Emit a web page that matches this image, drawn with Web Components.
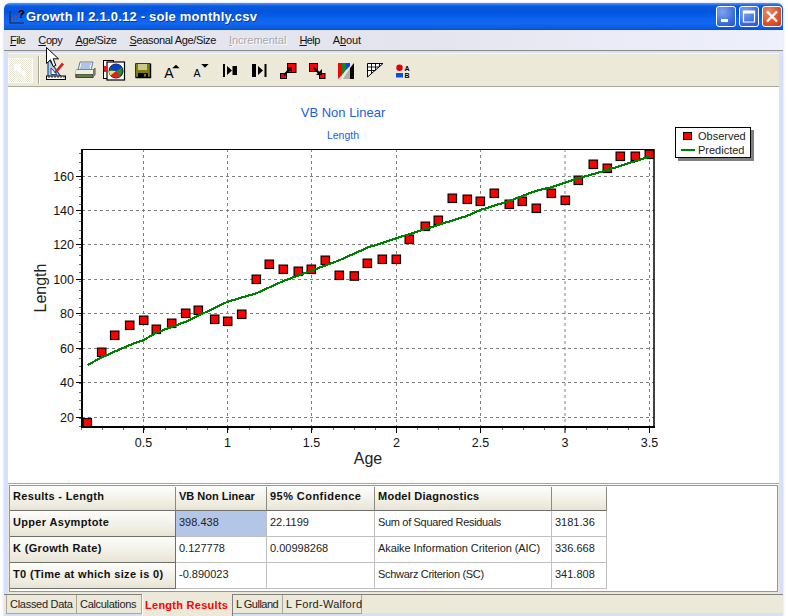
<!DOCTYPE html>
<html lang="en"><head><meta charset="utf-8"><title>Growth II</title>
<style>
html,body{margin:0;padding:0;background:#fff;width:788px;height:616px;overflow:hidden;font:11px "Liberation Sans",Arial,sans-serif;color:#000}
</style></head><body>
<xp-window>
  <xp-titlebar slot="title">Growth II 2.1.0.12 - sole monthly.csv</xp-titlebar>
  <xp-menubar slot="menu">
    <xp-menuitem style="letter-spacing:-.6px"><u>F</u>ile</xp-menuitem><xp-menuitem style="letter-spacing:-.4px"><u>C</u>opy</xp-menuitem><xp-menuitem style="letter-spacing:-.37px"><u>A</u>ge/Size</xp-menuitem><xp-menuitem style="letter-spacing:-.35px"><u>S</u>easonal Age/Size</xp-menuitem><xp-menuitem disabled><u>I</u>ncremental</xp-menuitem><xp-menuitem style="letter-spacing:-.6px"><u>H</u>elp</xp-menuitem><xp-menuitem style="letter-spacing:-.1px">A<u>b</u>out</xp-menuitem>
  </xp-menubar>
  <xp-toolbar slot="tools"></xp-toolbar>
  <growth-chart slot="chart"><chart-legend></chart-legend></growth-chart>
  <results-grid slot="grid"></results-grid>
  <xp-tabs slot="tabs">
    <xp-tab style="width:71px;letter-spacing:-.28px;border-left:1px solid #aca899">Classed Data</xp-tab><xp-tab style="width:65px;letter-spacing:-.3px">Calculations</xp-tab><xp-tab active style="width:91px;letter-spacing:.27px">Length Results</xp-tab><xp-tab style="width:50px;letter-spacing:-.5px">L Gulland</xp-tab><xp-tab style="width:79px;letter-spacing:.27px">L Ford-Walford</xp-tab>
  </xp-tabs>
  <xp-cursor slot="over"></xp-cursor>
</xp-window>
<script>
function def(name, css, html){
  customElements.define(name, class extends HTMLElement{
    constructor(){super();const r=this.attachShadow({mode:'open'});r.innerHTML='<style>'+css+'</style>'+html;}
  });
}
def('xp-window',`
:host{display:flex;flex-direction:column;position:relative;box-sizing:border-box;width:779px;height:613px;margin:3px 0 0 4px;background:#d6e0fa;box-shadow:0 0 3px #c4d2f4;border-radius:6px 6px 0 0}
.panel{display:flex;flex-direction:column;margin:2px 4px 0 4px;background:#ece9d8;height:541px}
.sep{height:2px;background:#fff;border-top:1px solid #aca899;box-sizing:border-box;}
.gridwrap{padding:0 1px 2px 1px;height:109px;box-sizing:border-box}
`,`<slot name="title"></slot><slot name="menu"></slot>
<div class="panel"><slot name="tools"></slot><slot name="chart"></slot><div class="sep"></div><div class="gridwrap"><slot name="grid"></slot></div></div>
<slot name="tabs"></slot><slot name="over"></slot>`);

def('xp-titlebar',`
:host{display:flex;align-items:center;height:27px;box-sizing:border-box;padding:0 1px 0 3px;border-radius:6px 6px 0 0;
background:linear-gradient(180deg,#5c96f2 0,#0a5ae0 3px,#0054dc 9px,#0a62ee 15px,#1368f0 20px,#0a5ce4 25px,#0450d0 27px);color:#fff}
.t{flex:1;font:bold 13px "Liberation Sans",sans-serif;letter-spacing:.22px;margin-left:1px;text-shadow:1px 1px #0d3aa0;white-space:nowrap}
svg{display:block;flex:none}
.b{flex:none;box-sizing:border-box;width:20px;height:21px;border:1px solid #fff;border-radius:3px;margin-left:3px;background:radial-gradient(circle at 30% 25%,#7fa5ee,#3566dc 70%,#2a55c8);display:flex;align-items:center;justify-content:center}
.b.x{background:radial-gradient(circle at 30% 25%,#ea8a68,#e0502a 60%,#c83c18)}
`,`<svg width="18" height="18" viewBox="0 0 18 18"><path d="M3 3V15H17" fill="none" stroke="#222" stroke-width="1.2"/><path d="M4 13L7 9L11 8L14 4" fill="none" stroke="#c33" stroke-width="1" stroke-dasharray="2 1"/><text x="11" y="10" font-family="Liberation Sans" font-weight="bold" font-size="11" fill="#000">?</text></svg>
<div class="t"><slot></slot></div>
<div class="b"><svg width="18" height="19" viewBox="0 0 18 19"><rect x="4" y="12" width="7" height="3" fill="#fff"/></svg></div>
<div class="b"><svg width="18" height="19" viewBox="0 0 18 19"><path d="M3.5 4H14.5V15H3.5Z" fill="none" stroke="#fff" stroke-width="1.2"/><rect x="3.5" y="4" width="11" height="2.5" fill="#fff"/></svg></div>
<div class="b x"><svg width="18" height="19" viewBox="0 0 18 19"><path d="M4 4.5L14 14.5M14 4.5L4 14.5" stroke="#fff" stroke-width="2.4"/></svg></div>`);

def('xp-menubar',`
:host{display:flex;height:21px;box-sizing:border-box;padding:0 0 0 6px;gap:13px;align-items:center;border-bottom:1px solid #8c8c8c;background:linear-gradient(90deg,#e6e6ee,#e4e4ee 50%,#eef0fb)}
`,`<slot></slot>`);
def('xp-menuitem',`
:host{display:block;white-space:nowrap;font:11px "Liberation Sans",sans-serif;color:#111}
:host([disabled]){color:#a8a8a8;text-shadow:1px 1px #fff}
`,`<slot></slot>`);

const ICONS=[
`<svg viewBox="0 0 24 24"><path d="M4 -1V18H17Z" fill="#b8cce0" stroke="#1a4a8a" stroke-width="1.2"/><path d="M7 9V15.5H13Z" fill="#fff" stroke="#1a4a8a"/><path d="M11 12L18 3.5L20 5.5L13 13.5Z" fill="#d82020"/><path d="M10.5 14L11 12L13 13.5Z" fill="#222"/><rect x="2.5" y="17" width="19" height="3.5" fill="#fff" stroke="#000"/><path d="M5 17V19M8 17V19M11 17V19M14 17V19M17 17V19M20 17V19" stroke="#000" stroke-width=".8"/></svg>`,
`<svg viewBox="0 0 24 24"><path d="M7 3H20L18 11H5Z" fill="#eef3fc" stroke="#6a7890"/><path d="M8 5H18M8 7H17M7 9H17" stroke="#6f95d8"/><path d="M3 11H20L22 9V16L20 18H3Z" fill="#d8d8b8" stroke="#555"/><rect x="3" y="15" width="17" height="3.5" fill="#5f7a4a" stroke="#444"/><rect x="2.5" y="11" width="17.5" height="4" fill="#efefdc"/><path d="M20 11L22 9V16L20 18.5" fill="#7a7a70"/></svg>`,
`<svg viewBox="0 0 24 24"><rect x="1.5" y="1.5" width="10" height="18" fill="#fff" stroke="#000"/><rect x="5" y="3" width="17.5" height="18" fill="#fff" stroke="#000" stroke-width="1.2"/><circle cx="14" cy="12" r="7" fill="#1f8f2f" stroke="#111"/><path d="M14 12L7.5 10A7 7 0 0 1 20 8.5Z" fill="#1038d0"/><path d="M14 12L8.5 16.5A7 7 0 0 0 18 17.5Z" fill="#e02020"/><path d="M14 12L7 12A7 7 0 0 0 8.5 16.5Z" fill="#f0e060"/><path d="M2 7h3v6H2z" fill="#e02020"/></svg>`,
`<svg viewBox="0 0 24 24"><rect x="4.5" y="4.5" width="15" height="14" fill="#808000"/><path d="M19.5 4.5V18.5H4.5" fill="none" stroke="#000" stroke-width="1.4"/><path d="M4.5 18.5V4.5H19" fill="none" stroke="#3a3a10"/><rect x="7" y="5" width="9" height="6" fill="#c8c890"/><rect x="7" y="14" width="10" height="4.5" fill="#000"/><rect x="13" y="15" width="2" height="2.5" fill="#808000"/></svg>`,
`<svg viewBox="0 0 24 24"><text x="4.2" y="19.3" font-family="Liberation Sans" font-size="14" fill="#000">A</text><path d="M12.2 9.3L16 5.8L19.6 9.3Z" fill="#000"/></svg>`,
`<svg viewBox="0 0 24 24"><text x="4.5" y="18.3" font-family="Liberation Sans" font-size="10.5" fill="#000">A</text><path d="M12.2 5H19.6L16 8.8Z" fill="#000"/></svg>`,
`<svg viewBox="0 0 24 24"><rect x="5" y="5" width="2" height="13"/><path d="M9 7L14 11.5L9 16Z"/><rect x="14.5" y="7" width="4.5" height="9"/></svg>`,
`<svg viewBox="0 0 24 24"><rect x="5" y="5" width="4" height="13"/><path d="M11 7L16 11.5L11 16Z"/><rect x="17.5" y="5" width="2" height="13"/></svg>`,
`<svg viewBox="0 0 24 24"><rect x="11.5" y="4.5" width="8.5" height="9" fill="#f00" stroke="#000"/><rect x="4.5" y="14.5" width="6" height="5" fill="#f00" stroke="#000"/><path d="M8 16L14 10" stroke="#000" stroke-width="2"/><path d="M11 8H16V13Z"/></svg>`,
`<svg viewBox="0 0 24 24"><rect x="4.5" y="4.5" width="8" height="8" fill="#f00" stroke="#000"/><rect x="14.5" y="14.5" width="5.5" height="5" fill="#f00" stroke="#000"/><path d="M9 9L15 15" stroke="#000" stroke-width="2"/><path d="M11 16H17V10Z"/></svg>`,
`<svg viewBox="0 0 24 24"><path d="M4 4H8V16L4 20Z" fill="#f00"/><path d="M8 4H12V11L8 16Z" fill="#0a8a20"/><path d="M12 4H16V7L12 11Z" fill="#1040e0"/><path d="M9 20L16 9V20Z" fill="#b0b0b0"/><path d="M16 9L20 4V20H16Z" fill="#000"/></svg>`,
`<svg viewBox="0 0 24 24"><path d="M4.5 4.5H20L4.5 18Z" fill="#fff" stroke="#000"/><path d="M8.5 4.5V14.5M12.5 4.5V11M16.5 4.5V7.5M4.5 8H16M4.5 11.5H12.5" stroke="#000" stroke-width=".9" fill="none"/></svg>`,
`<svg viewBox="0 0 24 24"><circle cx="7.5" cy="8.7" r="3.2" fill="#e00000"/><rect x="4" y="14" width="7" height="4.5" fill="#0a50e0"/><text x="12.5" y="11.5" font-family="Liberation Sans" font-weight="bold" font-size="7" fill="#000">A</text><text x="12.5" y="18.7" font-family="Liberation Sans" font-weight="bold" font-size="7" fill="#000">B</text></svg>`
];
def('tool-btn',`:host{display:block;width:29px;height:33px;box-sizing:border-box;padding:5px 2.5px 0}
::slotted(svg){display:block;width:24px;height:24px;overflow:visible}`,`<slot></slot>`);
def('xp-toolbar',`
:host{display:flex;height:33px;flex:none;box-sizing:border-box;background:#ece9d8;border-top:1px solid #f8f7f0}
.dis{width:25px;height:25px;margin:4px 0 0 0;box-sizing:border-box;border:1px solid #fbfaf5;background:repeating-conic-gradient(#fff 0 25%,#e6e3d2 0 50%) 0 0/2px 2px;display:flex}
.sp{width:2px;height:28px;margin:2px 1px 0 5px;background:linear-gradient(90deg,#aca899 50%,#fff 50%)}
`,`<div class="dis"><svg width="23" height="23" viewBox="0 0 23 23"><path d="M5 5H13L10.5 7.5L18 15L15 18L7.5 10.5L5 13Z" fill="#fff"/></svg></div><div class="sp"></div>`+
ICONS.map(i=>`<tool-btn>${i}</tool-btn>`).join(''));

const PTS=[[87.3,422.7],[101.7,352.3],[114.7,335.3],[129.7,325.3],[143.7,320.3],[156.3,329.3],[171.7,323.3],[185.7,313.3],[198.3,310.3],[214.7,319.3],[227.7,321.3],[241.7,314.3],[256.3,279.3],[269.3,264.3],[283.3,269.3],[298.3,271.3],[311.3,269.3],[325.3,260.3],[339.3,275.3],[354.3,276],[367.3,263.3],[382.3,259.3],[396.3,259.3],[409.3,239.3],[425.3,226.3],[438.3,220.3],[452.3,198.3],[467.3,199.3],[480.3,201.3],[494.3,193.3],[509.3,204.3],[522.3,201.3],[536.3,208.3],[551.3,193.3],[565.3,200.3],[578.3,180.3],[593.3,164.3],[607.3,168.3],[620.3,156.3],[635.3,156.3],[649.3,154.3]];
const LINE=[[87.7,365],[101.7,357.3],[129.7,345],[143.7,340],[156.3,332.7],[185.7,321.7],[227.7,301.7],[256.3,293.3],[283.3,281],[311.3,270.7],[339.3,260.3],[367.3,247.7],[396.3,238.3],[425.3,229],[466.7,216],[480.3,210],[509.3,201],[536.3,190.7],[551.3,187.3],[578.3,178.3],[607.3,170],[649.3,156.7]];
function chartSvg(){
  const X0=82,X1=654,Y0=149,Y1=427,xs=[143.5,227.5,311.5,396.5,480.5,565,649.5],ys=[417.5,382.5,348.5,313.5,279.5,244.5,210.5,176.5];
  const xl=['0.5','1','1.5','2','2.5','3','3.5'],yl=[20,40,60,80,100,120,140,160];
  let s='';
  xs.forEach(x=>s+=`<path d="M${x} ${Y0}V${Y1}" stroke="#808080" stroke-dasharray="3 3"/>`);
  ys.forEach(y=>s+=`<path d="M${X0} ${y}H${X1}" stroke="#808080" stroke-dasharray="3 3"/>`);
  for(let x=143.5-21*3;x<654;x+=21.05){ s+=`<path d="M${Math.round(x)+.5} ${Y1}v3" stroke="#666"/>`; }
  xs.forEach((x,i)=>{s+=`<path d="M${x} ${Y1}v6" stroke="#000"/><text x="${x}" y="447" text-anchor="middle" class="t">${xl[i]}</text>`});
  for(let y=417.5+8.53;y>149;y-=8.53){ s+=`<path d="M79 ${Math.round(y)+.5}h3" stroke="#666"/>`; }
  ys.forEach((y,i)=>{s+=`<path d="M76 ${y}h6" stroke="#000"/><text x="74" y="${y+4.5}" text-anchor="end" class="t">${yl[i]}</text>`});
  s+=`<g clip-path="url(#plot)">`;
  PTS.forEach(p=>s+=`<rect x="${(p[0]-4.2).toFixed(1)}" y="${(p[1]-4.2).toFixed(1)}" width="8.4" height="8.4" fill="#f00" stroke="#000" stroke-width="1.2"/>`);
  s+=`<polyline points="${LINE.map(p=>p.join(',')).join(' ')}" fill="none" stroke="#008000" stroke-width="2.2" shape-rendering="crispEdges"/></g>`;
  s+=`<path d="M${X0} ${Y0+.5}H${X1}" stroke="#000"/><path d="M${X1} ${Y0}V${Y1}" stroke="#000" stroke-width="1.5"/><path d="M${X0} ${Y0}V${Y1+1}" stroke="#000" stroke-width="2"/><path d="M${X0-1} ${Y1}H${X1+1}" stroke="#000" stroke-width="2"/>`;
  s+=`<text x="343" y="117" text-anchor="middle" class="h">VB Non Linear</text><text x="343" y="139" text-anchor="middle" class="s">Length</text>`;
  s+=`<text x="368" y="464" text-anchor="middle" class="a">Age</text><text transform="translate(46 288) rotate(-90)" text-anchor="middle" class="a">Length</text>`;
  return `<svg width="771" height="396" viewBox="8 87 771 396"><defs><clipPath id="plot"><rect x="${X0}" y="${Y0}" width="${X1-X0}" height="${Y1-Y0+1}"/></clipPath></defs>${s}</svg>`;
}
def('growth-chart',`
:host{display:block;position:relative;height:396px;flex:none;background:#fff;border-top:1px solid #aca899}
svg{display:block}
.t{font:12.5px "Liberation Sans",sans-serif;fill:#111}
.h{font:13px "Liberation Sans",sans-serif;fill:#1c5ee0}
.s{font:10.5px "Liberation Sans",sans-serif;fill:#1c5ee0}
.a{font:16px "Liberation Sans",sans-serif;fill:#222}
`,chartSvg()+'<slot></slot>');
def('chart-legend',`
:host{display:flex;flex-direction:column;position:absolute;left:667px;top:40px;box-sizing:border-box;width:76px;height:31px;background:#fff;border:1px solid #000;box-shadow:3px 3px 0 #808080;font:11px "Liberation Sans",sans-serif;color:#222;padding:1px 0 0 5px}
.r{display:flex;align-items:center;height:14px}
.ic{width:17px;flex:none;display:flex;align-items:center}
.sq{display:block;width:9px;height:8px;background:#f00;border:1px solid #000;margin-left:2px;box-sizing:border-box}
.ln{display:block;width:14px;height:2px;background:#008000}
`,`<div class="r"><span class="ic"><span class="sq"></span></span>Observed</div><div class="r"><span class="ic"><span class="ln"></span></span>Predicted</div>`);

const ROWS=[
 [['Results - Length','h',.32],['VB Non Linear','h',0],['95% Confidence','h',.45],['Model Diagnostics','h',.25],['','h',0]],
 [['Upper Asymptote','rh',.33],['398.438','sel',0],['22.1199','',0],['Sum of Squared Residuals','',-.33],['3181.36','',0]],
 [['K (Growth Rate)','rh',.33],['0.127778','',0],['0.00998268','',0],['Akaike Information Criterion (AIC)','',-.07],['336.668','',0]],
 [['T0 (Time at which size is 0)','rh',.34],['-0.890023','',0],['','',0],['Schwarz Criterion (SC)','',-.3],['341.808','',0]]
];
def('grid-cell',`
:host{display:flex;align-items:center;box-sizing:border-box;padding:0 0 3px 3px;white-space:nowrap;border-right:1px solid #c0c0c0;border-bottom:1px solid #c0c0c0;color:#222;font:11px "Liberation Sans",sans-serif}
:host(.h),:host(.rh){font-weight:bold;color:#111;background:linear-gradient(180deg,#fdfdfb,#ece9dc 85%,#e6e3d4);border-right:1px solid #8a8a80;border-bottom:1px solid #70706a}
:host(.h){padding-bottom:5px}
:host(.rh){border-right:1px solid #70706a}
:host(.sel){background:#b3c6e8}
`,`<slot></slot>`);
def('results-grid',`
:host{display:block;box-sizing:border-box;height:107px;background:#fff;border:1px solid #7f9db9}
.g{display:grid;grid-template-columns:166px 91px 108px 177px 55px;grid-template-rows:24px 26px 26px 26px;width:597px;margin-top:1px}
`,`<div class="g">${ROWS.map(r=>r.map(c=>`<grid-cell class="${c[1]}" style="letter-spacing:${c[2]}px">${c[0]}</grid-cell>`).join('')).join('')}</div>`);

def('xp-tabs',`
:host{display:flex;height:22px;box-sizing:border-box;padding:0 0 0 2px;background:linear-gradient(180deg,#ece9d8 86%,#d6e0fa 86%);border-top:1px solid #808080;position:relative}
`,`<slot></slot>`);
def('xp-tab',`
:host{display:flex;align-items:center;box-sizing:border-box;height:19px;padding:0 0 1px 3px;border-right:1px solid #aca899;border-bottom:1px solid #aca899;font:11px "Liberation Sans",sans-serif;color:#222;white-space:nowrap}
:host([active]){font-weight:bold;color:#f00;height:22px;border-bottom:0;border-right:1px solid #808080;padding:0 0 1px 3px;margin-top:-1px;background:#ece9d8;box-shadow:inset 1px 0 #fff}
`,`<slot></slot>`);
def('xp-cursor',`
:host{display:block;position:absolute;left:41.5px;top:43.5px;width:14px;height:22px;pointer-events:none}
svg{display:block}
`,`<svg width="14" height="22" viewBox="0 0 14 22"><path d="M.5 .5V16.5L4.5 12.8L7.2 19.5L9.8 18.4L7.2 11.8H12.5Z" fill="#fff" stroke="#000"/></svg>`);
</script>
</body></html>
